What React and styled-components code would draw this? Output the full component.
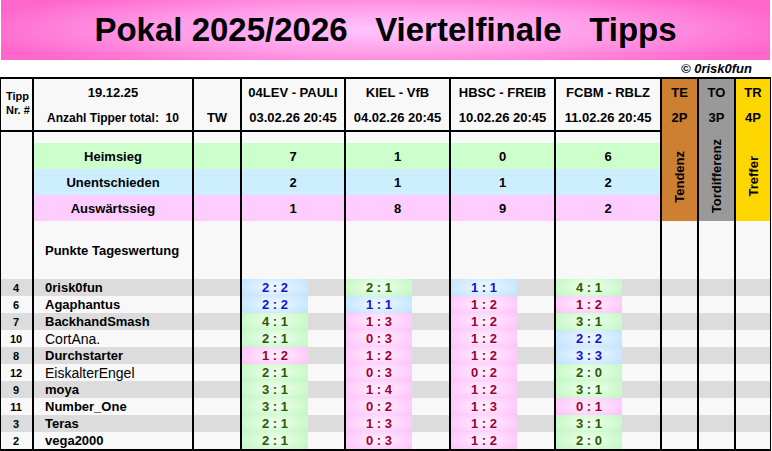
import React from "react";
import styled, { createGlobalStyle } from "styled-components";

const GlobalStyle = createGlobalStyle`
  html, body {
    margin: 0;
    padding: 0;
    background: #ffffff;
  }
  body {
    font-family: "Liberation Sans", Arial, sans-serif;
    color: #000;
  }
`;

const matches = [
  { teams: "04LEV - PAULI", date: "03.02.26 20:45" },
  { teams: "KIEL - VfB", date: "04.02.26 20:45" },
  { teams: "HBSC - FREIB", date: "10.02.26 20:45" },
  { teams: "FCBM - RBLZ", date: "11.02.26 20:45" },
];

const bands = [
  { label: "Heimsieg", tone: "green", values: [7, 1, 0, 6] },
  { label: "Unentschieden", tone: "blue", values: [2, 1, 1, 2] },
  { label: "Auswärtssieg", tone: "pink", values: [1, 8, 9, 2] },
];

const points = [
  { code: "TE", pts: "2P", name: "Tendenz", bg: "#cd7f32" },
  { code: "TO", pts: "3P", name: "Tordifferenz", bg: "#999999" },
  { code: "TR", pts: "4P", name: "Treffer", bg: "#ffd700" },
];

const tippers = [
  { nr: 4, name: "0risk0fun", tips: ["2:2", "2:1", "1:1", "4:1"] },
  { nr: 6, name: "Agaphantus", tips: ["2:2", "1:1", "1:2", "1:2"] },
  { nr: 7, name: "BackhandSmash", tips: ["4:1", "1:3", "1:2", "3:1"] },
  { nr: 10, name: "CortAna.", tips: ["2:1", "0:3", "1:2", "2:2"], light: true },
  { nr: 8, name: "Durchstarter", tips: ["1:2", "1:2", "1:2", "3:3"] },
  { nr: 12, name: "EiskalterEngel", tips: ["2:1", "0:3", "0:2", "2:0"], light: true },
  { nr: 9, name: "moya", tips: ["3:1", "1:4", "1:2", "3:1"] },
  { nr: 11, name: "Number_One", tips: ["3:1", "0:2", "1:3", "0:1"] },
  { nr: 3, name: "Teras", tips: ["2:1", "1:3", "1:2", "3:1"] },
  { nr: 2, name: "vega2000", tips: ["2:1", "0:3", "1:2", "2:0"] },
];

const bandColors = {
  green: "#ccffcc",
  blue: "#cceeff",
  pink: "#ffccff",
};

const chipColors = {
  green: { edge: "#c4f7c4", mid: "#f0fff0", text: "#2a5a00" },
  blue: { edge: "#c2e4ff", mid: "#f0f8ff", text: "#1414cc" },
  pink: { edge: "#ffc4fa", mid: "#fff0fe", text: "#9c0036" },
};

const toneOf = (tip) => {
  const [h, a] = tip.split(":").map(Number);
  if (h > a) return "green";
  if (h === a) return "blue";
  return "pink";
};

export default function App() {
  return (
    <>
      <GlobalStyle />
      <Page>
        <Banner>
          <Title>Pokal 2025/2026&nbsp;&nbsp;&nbsp;Viertelfinale&nbsp;&nbsp;&nbsp;Tipps</Title>
        </Banner>
        <Copyright>© 0risk0fun</Copyright>
        <Sheet>
          {/* header row */}
          <NrHead>
            <span>Tipp</span>
            <span>Nr. #</span>
          </NrHead>
          <HeadCell>
            <HeadLine>19.12.25</HeadLine>
            <HeadLine $small>Anzahl Tipper total:&nbsp;&nbsp;10</HeadLine>
          </HeadCell>
          <HeadCell>
            <HeadLine />
            <HeadLine>TW</HeadLine>
          </HeadCell>
          {matches.map((m) => (
            <HeadCell key={m.teams}>
              <HeadLine>{m.teams}</HeadLine>
              <HeadLine>{m.date}</HeadLine>
            </HeadCell>
          ))}
          {points.map((p, i) => (
            <PointCol key={p.code} $bg={p.bg} $col={8 + i}>
              <HeadLine>{p.code}</HeadLine>
              <HeadLine>{p.pts}</HeadLine>
              <PointName>
                <VerticalText>{p.name}</VerticalText>
              </PointName>
            </PointCol>
          ))}

          {/* spacer row */}
          <Cell $first />
          <Cell />
          <Cell />
          {matches.map((m) => (
            <Cell key={m.teams} />
          ))}

          {/* result bands */}
          {bands.map((b) => (
            <React.Fragment key={b.label}>
              <Cell $first />
              <BandCell $tone={b.tone}>{b.label}</BandCell>
              <BandCell $tone={b.tone} />
              {b.values.map((v, i) => (
                <BandCell key={i} $tone={b.tone}>
                  {v}
                </BandCell>
              ))}
            </React.Fragment>
          ))}

          {/* day points row */}
          <Cell $first />
          <DayLabel>Punkte Tageswertung</DayLabel>
          {Array.from({ length: 8 }).map((_, i) => (
            <Cell key={i} />
          ))}

          {/* tipper rows */}
          {tippers.map((t, r) => (
            <React.Fragment key={t.name}>
              <NrCell $stripe={r % 2 === 0}>{t.nr}</NrCell>
              <NameCell $stripe={r % 2 === 0} $light={t.light}>
                {t.name}
              </NameCell>
              <Cell $stripe={r % 2 === 0} />
              {t.tips.map((tip, i) => (
                <Cell key={i} $stripe={r % 2 === 0}>
                  <Chip $tone={toneOf(tip)}>{tip.replace(":", " : ")}</Chip>
                </Cell>
              ))}
              <Cell $stripe={r % 2 === 0} />
              <Cell $stripe={r % 2 === 0} />
              <Cell $stripe={r % 2 === 0} />
            </React.Fragment>
          ))}
        </Sheet>
      </Page>
    </>
  );
}

const Page = styled.div`
  width: 772px;
  height: 451px;
  overflow: hidden;
`;

const Banner = styled.div`
  height: 60px;
  margin: 0 2px 0 1px;
  display: flex;
  align-items: center;
  justify-content: center;
  background: radial-gradient(
    ellipse 55% 75% at 50% 50%,
    #ffc6ff 0%,
    #ff9ae6 55%,
    #ff66cc 100%
  );
`;

const Title = styled.h1`
  margin: 0;
  font-family: "Liberation Sans Narrow", "Liberation Sans", Arial, sans-serif;
  font-size: 33px;
  font-weight: bold;
  white-space: nowrap;
`;

const Copyright = styled.div`
  height: 17px;
  display: flex;
  align-items: center;
  justify-content: flex-end;
  padding-right: 20px;
  font-family: "Liberation Sans Narrow", "Liberation Sans", Arial, sans-serif;
  font-size: 13px;
  font-weight: bold;
  font-style: italic;
`;

const Sheet = styled.div`
  width: 771px;
  box-sizing: border-box;
  display: grid;
  grid-template-columns: 31px 160px 48px 104px 105px 105px 106px 37px 37px 36px;
  grid-template-rows: 53px 11px 26px 26px 26px 58px repeat(10, 17px);
  border-top: 2px solid #000;
  border-left: 1px solid #000;
  border-right: 1px solid #000;
  border-bottom: 2px solid #000;
  background: #f8f8f8;
  font-size: 13px;
  font-weight: bold;
`;

const Cell = styled.div`
  box-sizing: border-box;
  border-left: ${(p) => (p.$first ? "none" : "2px solid #000")};
  background: ${(p) => (p.$stripe ? "#dcdcdc" : "#f8f8f8")};
  display: flex;
  align-items: stretch;
  min-width: 0;
`;

const NrHead = styled.div`
  box-sizing: border-box;
  border-bottom: 2px solid #000;
  display: flex;
  flex-direction: column;
  padding: 10px 0 0 5px;
  font-size: 11px;
  line-height: 14px;
`;

const HeadCell = styled.div`
  box-sizing: border-box;
  border-left: 2px solid #000;
  border-bottom: 2px solid #000;
  display: flex;
  flex-direction: column;
  padding-top: 1px;
`;

const HeadLine = styled.div`
  height: 25px;
  flex: none;
  display: flex;
  align-items: center;
  justify-content: center;
  font-size: ${(p) => (p.$small ? "12px" : "13px")};
  white-space: nowrap;
`;

const PointCol = styled.div`
  grid-column: ${(p) => p.$col};
  grid-row: 1 / span 5;
  box-sizing: border-box;
  border-left: 2px solid #000;
  background: ${(p) => p.$bg};
  display: flex;
  flex-direction: column;
  padding-top: 1px;
`;

const PointName = styled.div`
  flex: 1;
  display: flex;
  align-items: center;
  justify-content: center;
  padding-top: 2px;
`;

const VerticalText = styled.span`
  writing-mode: vertical-rl;
  transform: rotate(180deg);
  font-size: 13px;
  white-space: nowrap;
`;

const BandCell = styled.div`
  box-sizing: border-box;
  border-left: 2px solid #000;
  background: ${(p) => bandColors[p.$tone]};
  display: flex;
  align-items: center;
  justify-content: center;
`;

const DayLabel = styled.div`
  box-sizing: border-box;
  border-left: 2px solid #000;
  display: flex;
  align-items: center;
  padding-left: 11px;
  white-space: nowrap;
`;

const NrCell = styled.div`
  background: ${(p) => (p.$stripe ? "#dcdcdc" : "#f8f8f8")};
  display: flex;
  align-items: center;
  justify-content: center;
  font-size: 11px;
  padding-right: 1px;
`;

const NameCell = styled.div`
  box-sizing: border-box;
  border-left: 2px solid #000;
  background: ${(p) => (p.$stripe ? "#dcdcdc" : "#f8f8f8")};
  display: flex;
  align-items: center;
  padding-left: 11px;
  font-size: ${(p) => (p.$light ? "14px" : "13px")};
  font-weight: ${(p) => (p.$light ? "normal" : "bold")};
  white-space: nowrap;
`;

const Chip = styled.div`
  width: 66px;
  display: flex;
  align-items: center;
  justify-content: center;
  color: ${(p) => chipColors[p.$tone].text};
  background: radial-gradient(
    ellipse 60% 80% at 50% 45%,
    ${(p) => chipColors[p.$tone].mid} 0%,
    ${(p) => chipColors[p.$tone].edge} 100%
  );
  white-space: pre;
`;
